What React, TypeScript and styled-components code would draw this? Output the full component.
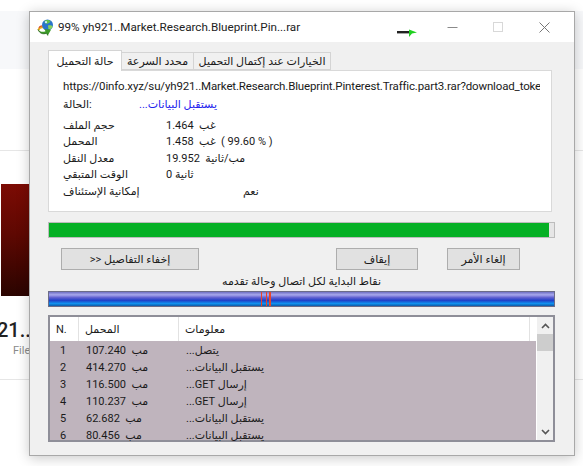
import { createGlobalStyle } from 'styled-components';
import styled from 'styled-components';

const GlobalStyle = createGlobalStyle`
  html, body {
    margin: 0;
    padding: 0;
    background: #fff;
  }
  body {
    width: 583px;
    height: 466px;
    overflow: hidden;
    position: relative;
    font-family: Roboto, "DejaVu Sans", sans-serif;
    color: #1a1a1a;
  }
`;

/* page behind the dialog */
const Backdrop = styled.div`
  width: 583px;
  height: 466px;
  padding-top: 11px;
  box-sizing: border-box;
  overflow: hidden;
`;

const TopBand = styled.div`
  height: 58px;
  background: #f7f8fa;
`;

const Rule = styled.div<{ $gap: number }>`
  height: 1px;
  margin-top: ${(p) => p.$gap}px;
  background: #e6e6e6;
`;

const Thumb = styled.div`
  width: 28px;
  height: 112px;
  margin: 33px 0 0 1px;
  background: linear-gradient(180deg, #7c0b04 0%, #5e0802 45%, #2a0400 100%);
`;

const PageTitle = styled.div`
  margin: 21px 0 0 -3px;
  font-size: 20px;
  line-height: 26px;
  font-weight: 500;
  color: #222;
  white-space: nowrap;
`;

const PageMeta = styled.div`
  margin: 0 0 0 13px;
  font-size: 11px;
  line-height: 15px;
  color: #8a8a8a;
`;

/* the dialog */
const Dialog = styled.div`
  position: absolute;
  left: 29px;
  top: 11px;
  width: 546px;
  height: 445px;
  box-sizing: border-box;
  border: 1px solid #a8a8a8;
  background: #f0f0f0;
  box-shadow: 0 2px 12px rgba(0, 0, 0, 0.22);
  display: flex;
  flex-direction: column;
`;

const TitleBar = styled.div`
  height: 30px;
  flex: none;
  background: #fff;
  display: flex;
  align-items: center;
  padding: 0 7px;
`;

const TitleText = styled.div`
  margin-left: 4px;
  font-size: 11.66px;
  color: #222;
  white-space: nowrap;
  flex: 1;
`;

const WindowButton = styled.div`
  width: 46px;
  height: 30px;
  display: flex;
  align-items: center;
  justify-content: center;
`;

const Content = styled.div`
  padding: 8px 0 0 18px;
  display: flex;
  flex-direction: column;
`;

const TabStrip = styled.div`
  display: flex;
  align-items: flex-end;
  height: 20px;
  position: relative;
  z-index: 1;
`;

const Tab = styled.div<{ $active?: boolean; $width: number }>`
  width: ${(p) => p.$width}px;
  height: ${(p) => (p.$active ? 21 : 18)}px;
  margin-bottom: ${(p) => (p.$active ? -1 : 0)}px;
  box-sizing: border-box;
  border: 1px solid #d4d4d4;
  border-bottom: ${(p) => (p.$active ? 'none' : '1px solid #d4d4d4')};
  border-left: ${(p) => (p.$active ? '1px solid #d4d4d4' : 'none')};
  background: ${(p) => (p.$active ? '#fff' : '#f0f0f0')};
  display: flex;
  align-items: center;
  justify-content: center;
  font-size: 11px;
  white-space: nowrap;
  overflow: hidden;
`;

const Panel = styled.div`
  width: 504px;
  height: 142px;
  box-sizing: border-box;
  border: 1px solid #d9d9d9;
  background: #fff;
  padding: 7px 0 0 14px;
`;

const UrlLine = styled.div`
  width: 477px;
  font-size: 11.5px;
  letter-spacing: -0.15px;
  line-height: 17px;
  overflow: hidden;
  white-space: nowrap;
`;

const StatusRow = styled.div`
  display: grid;
  grid-template-columns: 69px auto;
  justify-content: start;
  font-size: 11px;
  line-height: 16px;
  margin: 2px 0 5px;
`;

const StatusValue = styled.div`
  direction: rtl;
  color: #2222ee;
  width: 85px;
  white-space: nowrap;
`;

const Stats = styled.div`
  display: grid;
  grid-template-columns: 103px 1fr;
  grid-auto-rows: 16.4px;
  font-size: 11px;
  line-height: 16px;
`;

const StatValue = styled.div<{ $indent?: number }>`
  padding-left: ${(p) => p.$indent ?? 0}px;
  white-space: pre;
`;

const Progress = styled.div`
  margin-top: 10px;
  width: 507px;
  height: 16px;
  box-sizing: border-box;
  border: 1px solid #bcbcbc;
  background: #e6e6e6;
`;

const ProgressFill = styled.div`
  height: 100%;
  background: #06b025;
`;

const ButtonRow = styled.div`
  margin-top: 10px;
  display: flex;
  padding-left: 13px;
`;

const Button = styled.div<{ $width: number; $gap?: number }>`
  width: ${(p) => p.$width}px;
  margin-left: ${(p) => p.$gap ?? 0}px;
  height: 22px;
  box-sizing: border-box;
  border: 1px solid #adadad;
  background: #e1e1e1;
  display: flex;
  align-items: center;
  justify-content: center;
  font-size: 11px;
  direction: rtl;
`;

const BarCaption = styled.div`
  width: 507px;
  margin-top: 4px;
  height: 16px;
  font-size: 11px;
  line-height: 16px;
  text-align: center;
  direction: rtl;
`;

const ConnectionBar = styled.div`
  position: relative;
  margin-top: 1px;
  width: 507px;
  height: 16px;
  box-sizing: border-box;
  border: 1px solid #6c6c88;
  background: linear-gradient(
    180deg,
    #7070c4 0%,
    #a8a8ec 20%,
    #6060d0 40%,
    #2040c8 60%,
    #1090ee 82%,
    #0c5aa8 100%
  );
`;

const ConnectionMark = styled.span<{ $left: number; $width: number }>`
  position: absolute;
  top: 0;
  bottom: 0;
  left: ${(p) => p.$left}px;
  width: ${(p) => p.$width}px;
  background: #e8452a;
`;

const Table = styled.div`
  margin-top: 8px;
  width: 507px;
  height: 127px;
  box-sizing: border-box;
  border: 2px solid #8e8e98;
  display: flex;
  background: #fff;
`;

const TableBody = styled.div`
  width: 486px;
  display: flex;
  flex-direction: column;
`;

const Columns = styled.div`
  display: grid;
  grid-template-columns: 29px 100px 351px 6px;
`;

const HeaderRow = styled(Columns)`
  height: 24px;
  background: #fff;
  flex: none;
`;

const HeaderCell = styled.div`
  border-right: 1px solid #e2e2e2;
  padding-left: 6px;
  font-size: 11px;
  line-height: 25px;
  white-space: nowrap;
`;

const Rows = styled.div`
  flex: 1;
  min-height: 0;
  padding-top: 3px;
  background: #bfb4bd;
`;

const Row = styled(Columns)`
  height: 17px;
  font-size: 11px;
  line-height: 13px;

  &:last-child {
    height: 13px;
  }
`;

const NumberCell = styled.div`
  padding-left: 10px;
`;

const AmountCell = styled.div`
  padding-left: 7px;
  white-space: pre;
`;

const InfoCell = styled.div`
  padding-left: 7px;
  direction: rtl;
  display: flex;
  justify-content: flex-end;
  white-space: nowrap;
`;

const Scrollbar = styled.div`
  flex: 1;
  margin-left: 1px;
  background: #f0f0f0;
  display: flex;
  flex-direction: column;
  align-items: center;
`;

const ScrollButton = styled.div`
  height: 17px;
  width: 100%;
  display: flex;
  align-items: center;
  justify-content: center;
`;

const ScrollThumb = styled.div`
  width: 100%;
  height: 17px;
  background: #cdcdcd;
`;

const ScrollSpacer = styled.div`
  flex: 1;
`;

const Cursor = styled.svg`
  position: absolute;
  left: 397px;
  top: 29px;
`;

const conns = [
  { n: 1, amount: '107.240  مب', info: 'يتصل...' },
  { n: 2, amount: '414.270  مب', info: 'يستقبل البيانات...' },
  { n: 3, amount: '116.500  مب', info: 'إرسال GET...' },
  { n: 4, amount: '110.237  مب', info: 'إرسال GET...' },
  { n: 5, amount: '62.682  مب', info: 'يستقبل البيانات...' },
  { n: 6, amount: '80.456  مب', info: 'يستقبل البيانات...' },
];

const stats = [
  { label: 'حجم الملف', value: '1.464  غب' },
  { label: 'المحمل', value: '1.458  غب  \u200E( 99.60 % )' },
  { label: 'معدل النقل', value: '19.952  مب/ثانية' },
  { label: 'الوقت المتبقي', value: '0 ثانية' },
  { label: 'إمكانية الإستئناف', value: 'نعم', indent: 77 },
];

function AppIcon() {
  return (
    <svg width="17" height="17" viewBox="0 0 17 17">
      <path d="M0.5 11 C1.5 7.5 4.5 6 7 7 L6.5 9.5 C4.5 8.8 3 9.5 2.5 11.5 Z" fill="#e8a81c" />
      <path d="M1.5 8.5 C2.5 7 4 6.2 5.5 6.3 L5 7.6 C3.8 7.6 2.8 8.2 2.2 9.2 Z" fill="#d8482a" />
      <circle cx="10.5" cy="6" r="5.5" fill="#2a74cc" />
      <path d="M7.5 2 C9 0.6 12 0.8 13.5 2.2 C12.5 4.5 10 5.2 8 4.2 Z" fill="#63c24c" />
      <path d="M11 6.5 C13 6 15 6.5 15.8 7.5 C15 9.5 13 10.8 11.5 10.2 Z" fill="#8ad45e" />
      <circle cx="9" cy="3.2" r="1.1" fill="#d8ecff" />
      <path d="M1 10.5 C3 13 6 13.4 8.5 12.2 L7.5 10 L14 10.8 L10.8 16.5 L9.6 14.2 C6 15.6 2.5 14.4 1 10.5 Z" fill="#3c9a28" />
      <path d="M10.8 16.5 L9.6 14.2 C6 15.6 2.5 14.4 1 10.5" fill="none" stroke="#1e5f14" strokeWidth="0.8" />
    </svg>
  );
}

function App() {
  return (
    <>
      <GlobalStyle />
      <Backdrop>
        <TopBand />
        <Rule $gap={81} />
        <Thumb />
        <PageTitle>21..</PageTitle>
        <PageMeta>File</PageMeta>
        <Rule $gap={21} />
      </Backdrop>

      <Dialog>
        <TitleBar>
          <AppIcon />
          <TitleText>99% yh921..Market.Research.Blueprint.Pin...rar</TitleText>
          <WindowButton>
            <svg width="11" height="11" viewBox="0 0 11 11">
              <path d="M0.5 5.5H10.5" stroke="#8a8a8a" fill="none" />
            </svg>
          </WindowButton>
          <WindowButton>
            <svg width="11" height="11" viewBox="0 0 11 11">
              <rect x="0.5" y="0.5" width="9" height="9" stroke="#d8d8d8" fill="none" />
            </svg>
          </WindowButton>
          <WindowButton>
            <svg width="11" height="11" viewBox="0 0 11 11">
              <path d="M0.5 0.5L10.5 10.5M10.5 0.5L0.5 10.5" stroke="#777" fill="none" />
            </svg>
          </WindowButton>
        </TitleBar>

        <Content>
          <TabStrip>
            <Tab $active $width={74}>حالة التحميل</Tab>
            <Tab $width={72}>محدد السرعة</Tab>
            <Tab $width={137}>الخيارات عند إكتمال التحميل</Tab>
          </TabStrip>

          <Panel>
            <UrlLine>https://0info.xyz/su/yh921..Market.Research.Blueprint.Pinterest.Traffic.part3.rar?download_token</UrlLine>
            <StatusRow>
              <div>الحالة:</div>
              <StatusValue>يستقبل البيانات...</StatusValue>
            </StatusRow>
            <Stats>
              {stats.map((s) => (
                <>
                  <div key={s.label}>{s.label}</div>
                  <StatValue $indent={s.indent}>{s.value}</StatValue>
                </>
              ))}
            </Stats>
          </Panel>

          <Progress>
            <ProgressFill style={{ width: `${99.6 * 0.995}%` }} />
          </Progress>

          <ButtonRow>
            <Button $width={138}>إخفاء التفاصيل &lt;&lt;</Button>
            <Button $width={82} $gap={137}>إيقاف</Button>
            <Button $width={73} $gap={29}>إلغاء الأمر</Button>
          </ButtonRow>

          <BarCaption>نقاط البداية لكل اتصال وحالة تقدمه</BarCaption>

          <ConnectionBar>
            <ConnectionMark $left={212} $width={1} />
            <ConnectionMark $left={217} $width={1} />
            <ConnectionMark $left={220} $width={2} />
          </ConnectionBar>

          <Table>
            <TableBody>
              <HeaderRow>
                <HeaderCell>N.</HeaderCell>
                <HeaderCell>المحمل</HeaderCell>
                <HeaderCell>معلومات</HeaderCell>
              </HeaderRow>
              <Rows>
                {conns.map((c) => (
                  <Row key={c.n}>
                    <NumberCell>{c.n}</NumberCell>
                    <AmountCell>{c.amount}</AmountCell>
                    <InfoCell>{c.info}</InfoCell>
                  </Row>
                ))}
              </Rows>
            </TableBody>
            <Scrollbar>
              <ScrollButton>
                <svg width="9" height="6" viewBox="0 0 9 6">
                  <path d="M1 5L4.5 1.5L8 5" stroke="#555" strokeWidth="1.6" fill="none" />
                </svg>
              </ScrollButton>
              <ScrollThumb />
              <ScrollSpacer />
              <ScrollButton>
                <svg width="9" height="6" viewBox="0 0 9 6">
                  <path d="M1 1L4.5 4.5L8 1" stroke="#555" strokeWidth="1.6" fill="none" />
                </svg>
              </ScrollButton>
            </Scrollbar>
          </Table>
        </Content>
      </Dialog>

      <Cursor width="21" height="9" viewBox="0 0 21 9">
        <rect x="0" y="2" width="13" height="2.4" fill="#222" />
        <path d="M12 0.5L20 3.4L15 4.6L12 8Z" fill="#1fd01f" />
      </Cursor>
    </>
  );
}

export default App;
